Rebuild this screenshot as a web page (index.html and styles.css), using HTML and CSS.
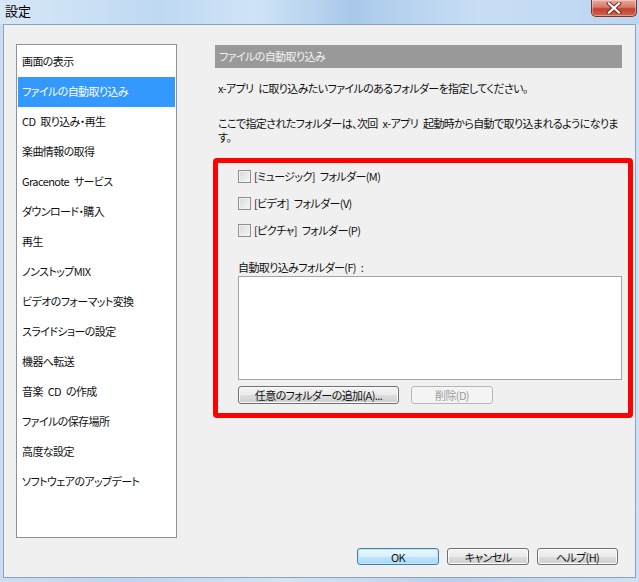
FILE: index.html
```html
<!DOCTYPE html>
<html lang="ja">
<head>
<meta charset="utf-8">
<title>設定</title>
<link rel="stylesheet" href="styles.css">
</head>
<body>
<div class="window">
  <div class="titlebar">
    <span class="title">設定</span>
    <div class="close">
      <svg width="16" height="12" viewBox="0 0 16 12">
        <path d="M3 1.5 L13 10.5 M13 1.5 L3 10.5" stroke="#6b2a22" stroke-width="4" stroke-linecap="square"/>
        <path d="M3 1.5 L13 10.5 M13 1.5 L3 10.5" stroke="#ffffff" stroke-width="2.2" stroke-linecap="square"/>
      </svg>
    </div>
  </div>
  <div class="client">
    <div class="main">
      <ul class="nav">
        <li>画面の表示</li>
        <li class="selected">ファイルの自動取り込み</li>
        <li>CD 取り込み・再生</li>
        <li>楽曲情報の取得</li>
        <li>Gracenote サービス</li>
        <li>ダウンロード・購入</li>
        <li>再生</li>
        <li>ノンストップMIX</li>
        <li>ビデオのフォーマット変換</li>
        <li>スライドショーの設定</li>
        <li>機器へ転送</li>
        <li>音楽 CD の作成</li>
        <li>ファイルの保存場所</li>
        <li>高度な設定</li>
        <li>ソフトウェアのアップデート</li>
      </ul>
      <div class="panel">
        <div class="panel-header">ファイルの自動取り込み</div>
        <p class="desc desc1">x-アプリ に取り込みたいファイルのあるフォルダーを指定してください。</p>
        <p class="desc desc2">ここで指定されたフォルダーは、次回 x-アプリ 起動時から自動で取り込まれるようになりま<br>す。</p>
        <div class="highlight">
          <div class="checks">
            <label class="check"><span class="box"></span>[ミュージック] フォルダー(M)</label>
            <label class="check"><span class="box"></span>[ビデオ] フォルダー(V)</label>
            <label class="check"><span class="box"></span>[ピクチャ] フォルダー(P)</label>
          </div>
          <div class="field-label">自動取り込みフォルダー(F) :</div>
          <div class="listbox"></div>
          <div class="actions">
            <button class="btn btn-add">任意のフォルダーの追加(A)...</button>
            <button class="btn btn-disabled">削除(D)</button>
          </div>
        </div>
      </div>
    </div>
    <div class="footer">
      <button class="btn btn-default">OK</button>
      <button class="btn">キャンセル</button>
      <button class="btn btn-help">ヘルプ(H)</button>
    </div>
  </div>
</div>
</body>
</html>
```
FILE: styles.css
```css
* { box-sizing: border-box; }
html, body { margin: 0; padding: 0; }
body {
  width: 639px;
  height: 582px;
  overflow: hidden;
  font-family: "Noto Sans CJK JP", "Noto Sans", sans-serif;
  font-size: 11px;
  letter-spacing: -0.6px;
  word-spacing: 3px;
  font-feature-settings: "palt" 1;
  color: #111;
}
.window {
  width: 639px;
  height: 582px;
  display: flex;
  flex-direction: column;
  background: linear-gradient(90deg, #c9def2 0%, #bcd6f0 20%, #d2e4f5 45%, #b7d1ec 70%, #cfe2f5 100%);
}
.titlebar {
  height: 24px;
  display: flex;
  justify-content: space-between;
  align-items: flex-start;
  background: linear-gradient(90deg, #d6e7f7 0%, #bfd9f2 25%, #cfe3f6 40%, #a9c9ea 55%, #c8def4 75%, #bcd6f1 100%);
}
.title {
  font-size: 13px;
  letter-spacing: 0;
  color: #000;
  padding: 3px 0 0 5px;
  line-height: 16px;
}
.close {
  width: 46px;
  height: 17px;
  margin-right: 2px;
  border: 1px solid #7b3128;
  border-top: none;
  border-radius: 0 0 5px 5px;
  background: linear-gradient(#e9a99c 0%, #d8786a 45%, #c2412f 55%, #d0664c 100%);
  box-shadow: inset 0 0 0 1px rgba(255,255,255,0.35);
  display: flex;
  align-items: center;
  justify-content: center;
}
.client {
  flex: 1;
  margin: 0 3px 4px 3px;
  border: 1px solid #8da2ba;
  background: #f0f0f0;
  display: flex;
  flex-direction: column;
}
.main {
  display: flex;
  padding: 19px 0 0 12px;
}
.nav {
  list-style: none;
  margin: 0;
  padding: 2px 1px 0 1px;
  width: 161px;
  height: 494px;
  background: #fff;
  border: 1px solid #8e9399;
}
.nav li {
  height: 30px;
  line-height: 29px;
  padding-left: 4px;
  white-space: nowrap;
}
.nav li.selected {
  background: #3399ff;
  color: #fff;
}
.panel {
  margin-left: 36px;
  padding-top: 1px;
  width: 420px;
  display: flex;
  flex-direction: column;
}
.panel-header {
  margin-left: 2px;
  width: 407px;
  height: 23px;
  line-height: 23px;
  padding-left: 4px;
  background: #999999;
  color: #f4f4f4;
}
.desc {
  margin: 0 0 0 5px;
  line-height: 14px;
  white-space: nowrap;
}
.desc1 { margin-top: 13px; }
.desc2 { margin-top: 21px; }
.highlight {
  margin-top: 14px;
  width: 420px;
  border: 5px solid #ff0000;
  border-radius: 4px;
  padding: 5px 0 9px 20px;
  display: flex;
  flex-direction: column;
}
.checks {
  display: flex;
  flex-direction: column;
  gap: 11px;
}
.check {
  display: flex;
  align-items: center;
  height: 16px;
  line-height: 16px;
  white-space: pre;
}
.box {
  width: 13px;
  height: 13px;
  margin-right: 3px;
  border: 1px solid #8f8f8f;
  background: linear-gradient(135deg, #d9d9d9, #f7f7f7);
  box-shadow: inset 0 0 0 1px #f2f2f2;
}
.field-label {
  margin-top: 21px;
  height: 16px;
  line-height: 16px;
}
.listbox {
  margin-top: 1px;
  width: 384px;
  height: 104px;
  background: #fff;
  border: 1px solid #a5a5a5;
}
.actions {
  margin-top: 6px;
  display: flex;
  gap: 12px;
}
.btn {
  font-family: inherit;
  font-size: 11px;
  letter-spacing: -0.6px;
  word-spacing: 3px;
  font-feature-settings: "palt" 1;
  color: #111;
  height: 17px;
  width: 82px;
  padding: 0;
  line-height: 14px;
  border: 1px solid #707070;
  border-radius: 3px;
  background: linear-gradient(#f3f3f3 0%, #ebebeb 50%, #dddddd 51%, #cfcfcf 100%);
  box-shadow: inset 0 0 0 1px #fbfbfb;
}
.btn-add { width: 161px; height: 18px; }
.btn-disabled {
  height: 18px;
  border-color: #b5b8ba;
  background: #f4f4f4;
  color: #9a9a9a;
  box-shadow: none;
}
.footer {
  margin-top: 10px;
  padding-right: 17px;
  display: flex;
  justify-content: flex-end;
  gap: 8px;
}
.btn-default {
  border-color: #3c7fb1;
  background: linear-gradient(#eaf6fd 0%, #d9f0fc 50%, #bee6fd 51%, #a7d9f5 100%);
  box-shadow: inset 0 0 0 1px #c4e5f6;
}
.btn-help { width: 81px; }
```
